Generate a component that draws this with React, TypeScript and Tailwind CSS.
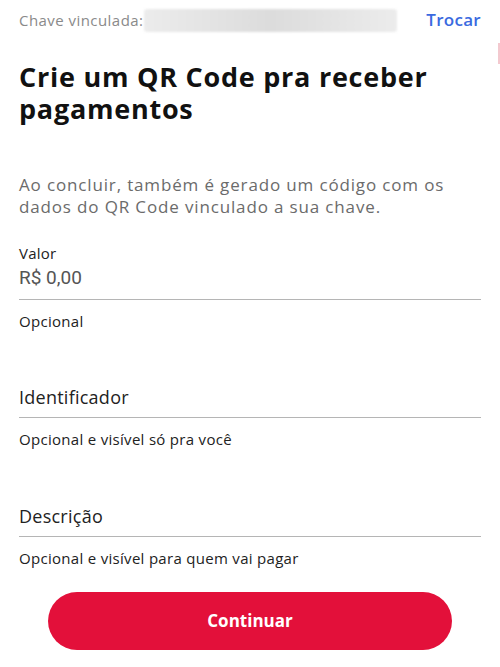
import React from "react";

const font = { fontFamily: '"Open Sans", "Liberation Sans", sans-serif' };

function Field({ label, hint }: { label: string; hint: string }) {
  return (
    <div className="flex flex-col">
      <div className="h-[24px] leading-[24px] text-[18px] tracking-[0.25px] text-[#222]">{label}</div>
      <div className="h-[9px] border-b border-[#b5b5b5]" />
      <div className="mt-[11px] h-[20px] leading-[20px] text-[15px] tracking-[0.3px] text-[#222]">{hint}</div>
    </div>
  );
}

export default function App() {
  return (
    <div className="relative w-[500px] h-[667px] bg-white overflow-hidden" style={font}>
      <div className="absolute right-0 top-[43px] w-[2px] h-[21px] bg-[#f3c9cf]" />
      <div className="px-[19px]">
        <div className="flex items-center h-[40px]">
          <span className="text-[15px] tracking-[0.45px] text-[#8a8a8a] leading-[20px]">Chave vinculada:</span>
          <div className="ml-[1px] w-[253px] h-[23px] rounded-[3px] bg-gradient-to-r from-[#ececec] via-[#dcdcdc] to-[#ececec] blur-[1px]" />
          <span className="ml-auto text-[17px] font-semibold tracking-[0.3px] text-[#3a6ae0]">Trocar</span>
        </div>
        <h1 className="mt-[21px] text-[27px] leading-[32px] font-bold tracking-[0.75px] text-[#111]">
          Crie um QR Code pra receber pagamentos
        </h1>
        <p className="mt-[49px] text-[17px] leading-[22px] tracking-[0.85px] text-[#6b6b6b]">
          Ao concluir, também é gerado um código com os dados do QR Code vinculado a sua chave.
        </p>
        <div className="mt-[25px] h-[20px] leading-[20px] text-[15px] tracking-[0.2px] text-[#222]">Valor</div>
        <div
          className="mt-[3px] h-[24px] leading-[24px] text-[19px] text-[#555]"
          style={{ fontFamily: 'Roboto, "Liberation Sans", sans-serif' }}
        >
          R$ 0,00
        </div>
        <div className="h-[10px] border-b border-[#b5b5b5]" />
        <div className="mt-[11px] h-[20px] leading-[20px] text-[15px] tracking-[0.3px] text-[#222]">Opcional</div>
        <div className="mt-[54px]">
          <Field label="Identificador" hint="Opcional e visível só pra você" />
        </div>
        <div className="mt-[55px]">
          <Field label="Descrição" hint="Opcional e visível para quem vai pagar" />
        </div>
      </div>
      <div className="mt-[24px] flex justify-center">
        <button className="w-[404px] h-[58px] rounded-full bg-[#e3103a] text-white text-[17px] font-bold">
          Continuar
        </button>
      </div>
    </div>
  );
}
